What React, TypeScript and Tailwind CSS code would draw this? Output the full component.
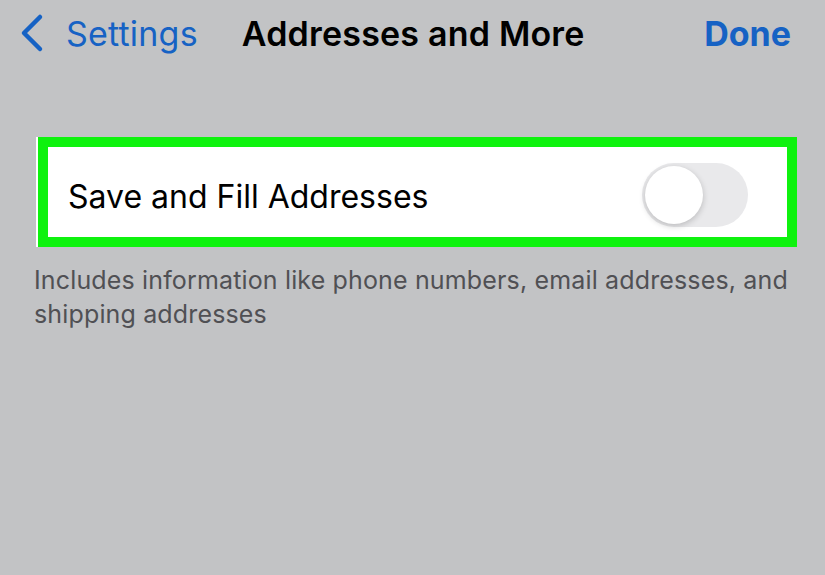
import React from 'react';

const font = { fontFamily: 'Inter, "Noto Sans", sans-serif' };

export default function App() {
  return (
    <div className="w-[825px] h-[575px] bg-[#c2c3c5] overflow-hidden" style={font}>
      {/* Навигация */}
      <header className="h-[66px] flex items-center pl-[19px] pr-[34px]">
        <div className="flex items-center gap-[21px] text-[#1662c4]">
          <svg width="26" height="40" viewBox="0 0 26 40" fill="none">
            <path d="M21 4 L5 20 L21 36" stroke="#1662c4" strokeWidth="4.5" strokeLinecap="round" strokeLinejoin="round" />
          </svg>
          <span className="text-[34px] tracking-[0.2px]">Settings</span>
        </div>
        <h1 className="ml-[44px] text-[34px] font-semibold text-black tracking-[0.2px]">Addresses and More</h1>
        <button className="ml-auto text-[34px] font-bold text-[#1662c4]">Done</button>
      </header>

      {/* Карточка с переключателем */}
      <div className="mt-[71px] ml-[36px] w-[761px] bg-white">
        <div className="ml-[2px] h-[110px] border-[10px] border-[#0ef20e] flex items-center justify-between pt-[6px] pl-[20px] pr-[39px]">
          <span className="text-[32px] text-black pt-[3px]">Save and Fill Addresses</span>
          <div className="w-[106px] h-[64px] rounded-full bg-[#e9e9eb] p-[3px] flex items-center">
            <div className="w-[58px] h-[58px] rounded-full bg-white shadow-[0_2px_6px_rgba(0,0,0,0.2)]" />
          </div>
        </div>
      </div>

      <p className="mt-[16px] ml-[34px] mr-[20px] text-[25px] leading-[34px] tracking-[0.15px] text-[#505054]">
        Includes information like phone numbers, email addresses, and shipping addresses
      </p>
    </div>
  );
}
